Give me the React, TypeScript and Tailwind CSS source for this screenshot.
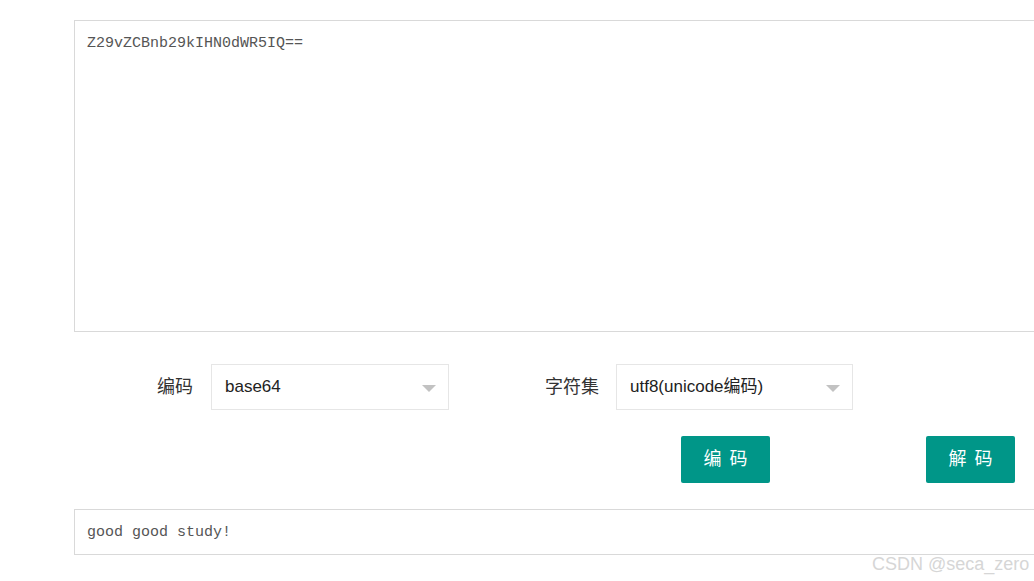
import React from "react";

const cjk = { fontFamily: '"Liberation Sans", "Noto Sans CJK SC", sans-serif' };
const mono = { fontFamily: '"Liberation Mono", "Noto Sans CJK SC", monospace' };

const Select = ({ value, width }: { value: string; width: string }) => (
  <div className={`${width} h-[46px] border border-[#e6e6e6] bg-white flex items-center justify-between pl-[13px] pr-[12px]`}>
    <span className="text-[17px] text-[#222]" style={cjk}>{value}</span>
    <span className="w-0 h-0 border-l-[7px] border-r-[7px] border-t-[7px] border-l-transparent border-r-transparent border-t-[#c2c2c2] mt-[2px]"></span>
  </div>
);

const Button = ({ label }: { label: string }) => (
  <button className="w-[89px] h-[47px] bg-[#009688] rounded-[2px] text-white text-[18px] flex items-center justify-center gap-[8px]" style={cjk}>
    {label.split("").map((c, i) => (
      <span key={i}>{c}</span>
    ))}
  </button>
);

export default function App() {
  return (
    <div className="w-[1034px] h-[581px] overflow-hidden bg-white relative">
      <div className="pl-[74px] pt-[20px] w-[1100px]">
        <div className="w-[1000px] h-[312px] border border-[#d9d9d9] px-[12px] py-[8px]">
          <span className="text-[15px] text-[#555]" style={mono}>Z29vZCBnb29kIHN0dWR5IQ==</span>
        </div>

        <div className="flex items-center mt-[32px]">
          <span className="ml-[83px] w-[37px] text-[18px] text-[#333]" style={cjk}>编码</span>
          <div className="ml-[17px]">
            <Select value="base64" width="w-[238px]" />
          </div>
          <span className="ml-[96px] w-[55px] text-[18px] text-[#333]" style={cjk}>字符集</span>
          <div className="ml-[16px]">
            <Select value="utf8(unicode编码)" width="w-[237px]" />
          </div>
        </div>

        <div className="flex items-center mt-[26px] ml-[607px] gap-[156px]">
          <Button label="编码" />
          <Button label="解码" />
        </div>

        <div className="w-[1000px] h-[46px] border border-[#d9d9d9] mt-[26px] flex items-center px-[12px]">
          <span className="text-[15px] text-[#555] mt-[2px]" style={mono}>good good study!</span>
        </div>
      </div>

      <div
        className="absolute left-[872px] top-[551px] text-[18px] text-[#d6d6d6]"
        style={{ fontFamily: '"Liberation Sans", sans-serif', textShadow: "0 0 1px #fff" }}
      >
        CSDN @seca_zero
      </div>
    </div>
  );
}
